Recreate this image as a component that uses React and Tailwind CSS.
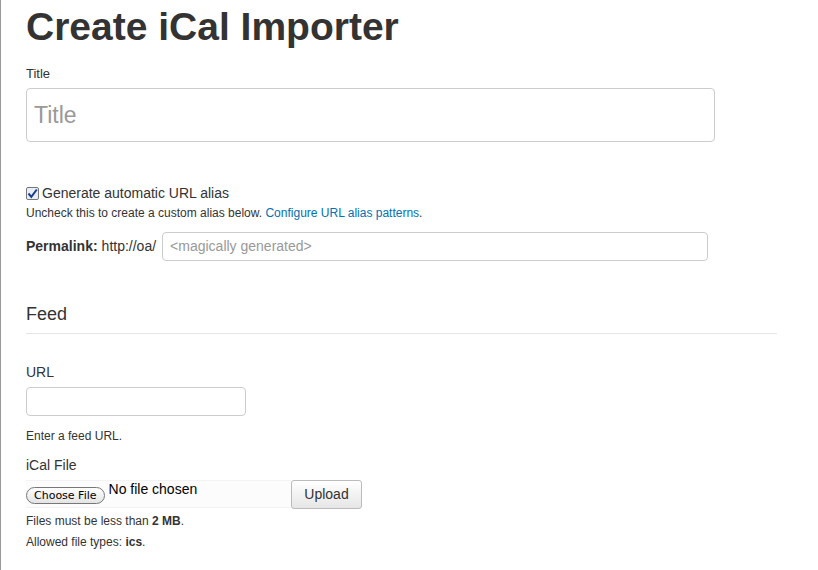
export default function App() {
  const font = { fontFamily: '"Liberation Sans", Arial, Helvetica, sans-serif' };
  return (
    <div className="w-[818px] h-[570px] bg-white text-[#333] border-l border-[#999] overflow-hidden" style={font}>
      <div className="pl-[25px] pr-[42px]">
        <h1 className="text-[39px] font-bold leading-[38px] pt-[8px] text-[#333]">Create iCal Importer</h1>
        <div className="mt-[20px] text-[13px] leading-[16px]">Title</div>
        <div className="mt-[6px] w-[689px] h-[54px] border border-[#ccc] rounded-[4px] flex items-center px-[7px] text-[23px] text-[#999]">Title</div>

        <div className="mt-[42px] flex items-center gap-[3px] text-[14px] leading-[18px]">
          <span className="w-[13px] h-[13px] border border-[#777] rounded-[2px] bg-[#e8eef8] flex items-center justify-center">
            <svg width="11" height="11" viewBox="0 0 11 11"><path d="M1.5 5.5 L4.3 8.8 L9.8 1.5" stroke="#1a3d8f" strokeWidth="2" fill="none" /></svg>
          </span>
          <span>Generate automatic URL alias</span>
        </div>
        <div className="mt-[4px] text-[12px] leading-[14px]">
          Uncheck this to create a custom alias below. <span className="text-[#0071b3]">Configure URL alias patterns</span>.
        </div>
        <div className="mt-[12px] flex items-center text-[14px]">
          <span className="font-bold">Permalink:</span>
          <span className="ml-[4px]">http://oa/</span>
          <div className="ml-[6px] w-[546px] h-[29px] border border-[#ccc] rounded-[4px] flex items-center px-[7px] text-[14px] text-[#999]">&lt;magically generated&gt;</div>
        </div>

        <div className="mt-[42px] text-[18px] leading-[22px]">Feed</div>
        <div className="mt-[8px] w-[751px] border-t border-[#e5e5e5]"></div>

        <div className="mt-[29px] text-[14px] leading-[18px]">URL</div>
        <div className="mt-[6px] w-[220px] h-[29px] border border-[#ccc] rounded-[4px]"></div>
        <div className="mt-[13px] text-[12px] leading-[14px]">Enter a feed URL.</div>

        <div className="mt-[13px] text-[14px] leading-[18px]">iCal File</div>
        <div className="mt-[6px] flex items-start">
          <div className="w-[265px] h-[28px] bg-[#fcfcfc] border-y border-[#f3f3f3] flex items-start">
            <span className="mt-[6px] h-[17px] px-[7px] border border-[#777] rounded-full bg-gradient-to-b from-white to-[#e4e4e4] text-[11px] leading-[15px] text-black" style={{ fontFamily: '"Lucida Grande", "DejaVu Sans", sans-serif' }}>Choose File</span>
            <span className="ml-[4px] text-[14px] leading-[16px] text-black">No file chosen</span>
          </div>
          <div className="w-[71px] h-[29px] border border-[#bbb] rounded-[3px] bg-gradient-to-b from-white to-[#e6e6e6] flex items-center justify-center text-[14px] text-[#333]">Upload</div>
        </div>
        <div className="mt-[5px] text-[12px] leading-[14px]">Files must be less than <b>2 MB</b>.</div>
        <div className="mt-[7px] text-[12px] leading-[14px]">Allowed file types: <b>ics</b>.</div>
      </div>
    </div>
  );
}
